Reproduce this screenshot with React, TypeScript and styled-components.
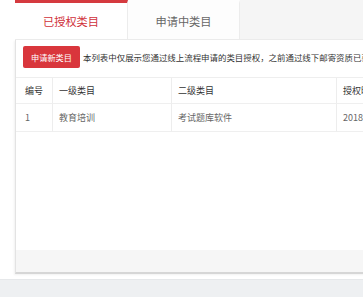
import React from "react";
import styled, { createGlobalStyle } from "styled-components";

const Global = createGlobalStyle`
  html, body { margin: 0; padding: 0; background: #fff; overflow: hidden; }
  body { font-family: "Noto Sans CJK SC", "Noto Sans", sans-serif; }
`;

const Page = styled.div`
  width: 363px;
  height: 297px;
  display: flex;
  flex-direction: column;
  overflow: hidden;
  background: #fff;
`;

const Main = styled.div`
  padding-left: 15px;
  display: flex;
  flex-direction: column;
`;

const TabBar = styled.div`
  display: flex;
  height: 40px;
  background: #f5f5f5;
  box-sizing: border-box;
  border-bottom: 1px solid #ececec;
`;

const Tab = styled.div<{ $active?: boolean }>`
  width: ${(p) => (p.$active ? 113 : 112)}px;
  box-sizing: border-box;
  display: flex;
  align-items: center;
  justify-content: center;
  font-size: 11.2px;
  color: ${(p) => (p.$active ? "#d0313a" : "#666")};
  background: ${(p) => (p.$active ? "#fff" : "#fdfdfd")};
  border-top: 3px solid ${(p) => (p.$active ? "#d53a3f" : "#fdfdfd")};
  border-right: 1px solid #ececec;
`;

const Panel = styled.div`
  width: 460px;
  border-left: 1px solid #e3e3e3;
  box-shadow: -1px 1px 2px rgba(0, 0, 0, 0.06);
  display: flex;
  flex-direction: column;
  border-bottom: 2px solid #d6d6d6;
`;

const Body = styled.div`
  height: 210px;
  background: #fff;
  display: flex;
  flex-direction: column;
`;

const Toolbar = styled.div`
  display: flex;
  align-items: center;
  gap: 3px;
  padding: 6px 0 0 7px;
  height: 22px;
`;

const Button = styled.div`
  width: 57px;
  height: 22px;
  background: #d9363c;
  border-radius: 2px;
  color: #fff;
  font-size: 8.2px;
  display: flex;
  align-items: center;
  justify-content: center;
  flex-shrink: 0;
`;

const Note = styled.div`
  font-size: 8.45px;
  color: #333;
  white-space: nowrap;
`;

const Table = styled.div`
  margin-top: 9px;
  display: grid;
  grid-template-columns: 37px 119px 165px 100px;
  border-top: 1px solid #eeeeee;
`;

const Cell = styled.div<{ $head?: boolean; $first?: boolean; $last?: boolean }>`
  height: ${(p) => (p.$head ? 25 : 27)}px;
  display: flex;
  align-items: center;
  padding-left: ${(p) => (p.$first ? 9 : 6)}px;
  font-size: 9px;
  color: ${(p) => (p.$head ? "#333" : "#666")};
  border-right: ${(p) => (p.$last ? "none" : "1px solid #ededed")};
  border-bottom: 1px solid #efefef;
  box-sizing: content-box;
  white-space: nowrap;
`;

const Footer = styled.div`
  height: 22px;
  background: #f6f6f6;
`;

const Band = styled.div`
  margin-top: 5px;
  flex: 1;
  background: #eef0f2;
  border-top: 1px solid #e6e8ea;
`;

const heads = ["编号", "一级类目", "二级类目", "授权时间"];
const row = ["1", "教育培训", "考试题库软件", "2018-05-21"];

export default function App() {
  return (
    <Page>
      <Global />
      <Main>
        <TabBar>
          <Tab $active>已授权类目</Tab>
          <Tab>申请中类目</Tab>
        </TabBar>
        <Panel>
          <Body>
            <Toolbar>
              <Button>申请新类目</Button>
              <Note>
                本列表中仅展示您通过线上流程申请的类目授权，之前通过线下邮寄资质已获得的授权不在此列表中展示
              </Note>
            </Toolbar>
            <Table>
              {heads.map((h, i) => (
                <Cell key={h} $head $first={i === 0} $last={i === 3}>
                  {h}
                </Cell>
              ))}
              {row.map((c, i) => (
                <Cell key={c} $first={i === 0} $last={i === 3}>
                  {c}
                </Cell>
              ))}
            </Table>
          </Body>
          <Footer />
        </Panel>
      </Main>
      <Band />
    </Page>
  );
}
